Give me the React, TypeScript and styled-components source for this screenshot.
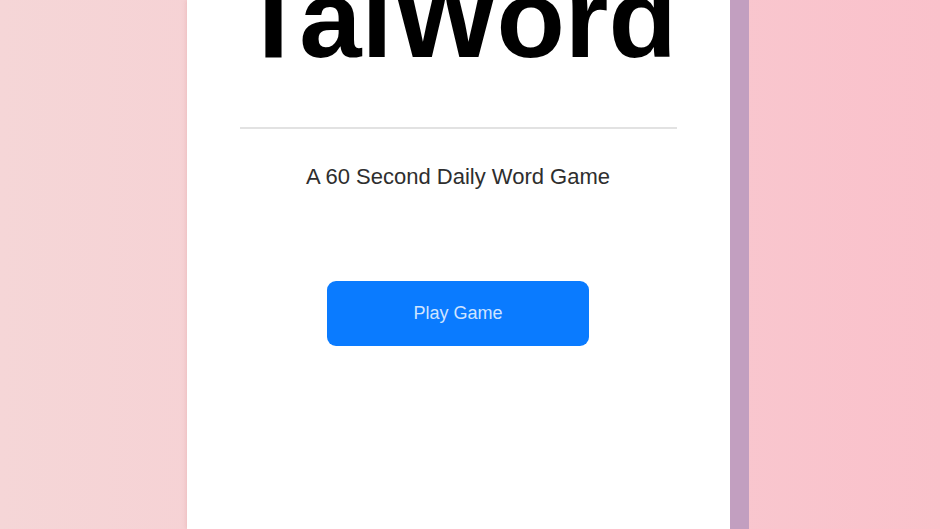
import React from 'react'
import styled, { createGlobalStyle } from 'styled-components'

const GlobalStyle = createGlobalStyle`
  html, body {
    margin: 0;
    padding: 0;
    height: 100%;
  }
  body {
    font-family: "Liberation Sans", Arial, Helvetica, sans-serif;
    overflow: hidden;
  }
  #root {
    height: 100%;
  }
`

const Page = styled.div`
  height: 100vh;
  display: flex;
  justify-content: center;
  padding-right: 24px;
  background: linear-gradient(90deg, #f5d6d7 0%, #f7cdd2 50%, #fac1cb 100%);
`

const Card = styled.main`
  width: 543px;
  box-sizing: border-box;
  height: 100%;
  padding: 0 53px;
  display: flex;
  flex-direction: column;
  align-items: center;
  background-color: #ffffff;
  box-shadow: 19px 0 0 0 #c29fc0, -1px 0 4px rgba(220, 150, 150, 0.35);
`

const Title = styled.h1`
  margin: -37px 0 0;
  font-size: 112px;
  line-height: 1;
  font-weight: 700;
  color: #000000;
  white-space: nowrap;
`

const Divider = styled.hr`
  align-self: stretch;
  margin: 52px 0 0;
  border: none;
  height: 2px;
  background-color: #e2e2e2;
`

const Subtitle = styled.p`
  margin: 35px 0 0;
  font-size: 22px;
  color: #2e2e2e;
`

const PlayButton = styled.button`
  margin-top: 91px;
  width: 262px;
  height: 65px;
  border: none;
  border-radius: 9px;
  outline: none;
  background-color: #0a7bff;
  color: #cfe4ff;
  font-family: "Liberation Sans", Arial, Helvetica, sans-serif;
  font-size: 18px;
  cursor: pointer;
`

const App = () => {
  return (
    <>
      <GlobalStyle />
      <Page>
        <Card>
          <Title>TaiWord</Title>
          <Divider />
          <Subtitle>A 60 Second Daily Word Game</Subtitle>
          <PlayButton>Play Game</PlayButton>
        </Card>
      </Page>
    </>
  )
}

export default App
